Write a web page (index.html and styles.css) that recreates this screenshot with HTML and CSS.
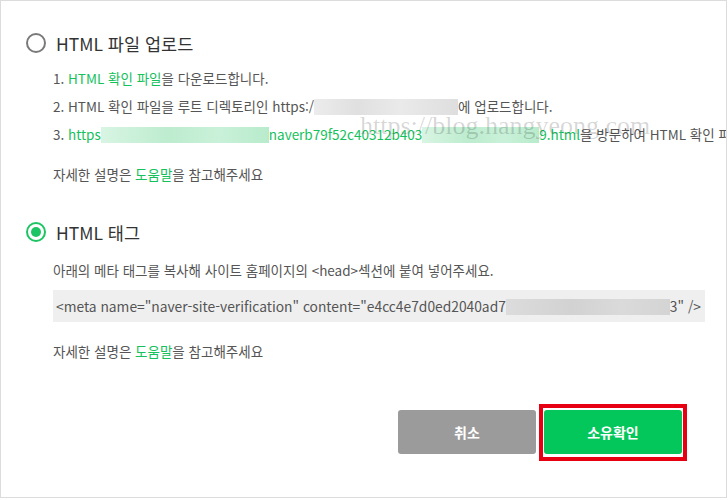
FILE: index.html
```html
<!DOCTYPE html>
<html lang="ko">
<head>
<meta charset="utf-8">
<link rel="stylesheet" href="styles.css">
</head>
<body>
<div class="dialog">
  <div class="section first">
    <div class="option">
      <span class="radio"></span>
      <span class="option-label">HTML 파일 업로드</span>
    </div>
    <ol class="steps">
      <li>1. <span class="green">HTML 확인 파일</span>을 다운로드합니다.</li>
      <li>2. HTML 확인 파일을 루트 디렉토리인 https:/<span class="blur gray w144"></span>에 업로드합니다.</li>
      <li>3. <span class="green">https<span class="blur mint w168"></span>naverb79f52c40312b403<span class="blur mint w117"></span>9.html</span>을 방문하여 HTML 확인 파일이 업로드 되었는지 확인합니다.</li>
    </ol>
    <p class="help">자세한 설명은 <span class="green">도움말</span>을 참고해주세요</p>
  </div>
  <div class="section second">
    <div class="option">
      <span class="radio checked"></span>
      <span class="option-label">HTML 태그</span>
    </div>
    <p class="desc">아래의 메타 태그를 복사해 사이트 홈페이지의 &lt;head&gt;섹션에 붙여 넣어주세요.</p>
    <div class="code">&lt;meta name="naver-site-verification" content="e4cc4e7d0ed2040ad7<span class="blur code-blur w164"></span>3" /&gt;</div>
    <p class="help">자세한 설명은 <span class="green">도움말</span>을 참고해주세요</p>
  </div>
  <div class="actions">
    <button class="btn cancel">취소</button>
    <span class="ok-wrap">
      <button class="btn ok">소유확인</button>
      <span class="highlight"></span>
    </span>
  </div>
  <div class="watermark">https://blog.hangyeong.com</div>
</div>
</body>
</html>
```

FILE: styles.css
```css
* { box-sizing: border-box; }
html, body { margin: 0; padding: 0; background: #fff; }
body {
  font-family: "Noto Sans CJK KR", "Noto Sans", sans-serif;
  color: #555;
  font-size: 13.5px;
}
.dialog {
  position: relative;
  width: 727px;
  height: 498px;
  border: 1px solid #dcdcdc;
  overflow: hidden;
  padding: 30px 0 0 25px;
}
.option {
  display: flex;
  align-items: center;
  height: 24px;
}
.radio {
  width: 20px;
  height: 20px;
  border-radius: 50%;
  border: 2px solid #7a7a7a;
  display: flex;
  align-items: center;
  justify-content: center;
  flex: none;
}
.radio.checked {
  border: 2.5px solid #1dc463;
}
.radio.checked::after {
  content: "";
  width: 10px;
  height: 10px;
  border-radius: 50%;
  background: #1dc463;
}
.option-label {
  margin-left: 10px;
  font-size: 17.5px;
  color: #333;
}
.steps {
  list-style: none;
  margin: 9px 0 0 27px;
  padding: 0;
}
.steps li {
  height: 28px;
  line-height: 28px;
  white-space: nowrap;
}
.green { color: #14c15b; }
.blur {
  display: inline-block;
  height: 16px;
  vertical-align: -3px;
}
.blur.gray { background: linear-gradient(90deg, #ececec, #e0e0e0 30%, #eaeaea 60%, #dedede); }
.blur.mint { background: linear-gradient(90deg, #d8f5e3, #bdeccf 40%, #c9f1d9 70%, #b8ebcc); }
.blur.code-blur { background: linear-gradient(90deg, #dcdcdc, #d2d2d2 40%, #dadada 70%, #d4d4d4); }
.w144 { width: 144px; }
.w168 { width: 168px; }
.w117 { width: 117px; }
.w164 { width: 164px; }
.help {
  margin: 12px 0 0 27px;
  height: 28px;
  line-height: 28px;
}
.section.second { margin-top: 32px; }
.desc {
  margin: 12px 0 0 27px;
  height: 28px;
  line-height: 28px;
}
.code {
  margin: 6px 0 0 27px;
  width: 652px;
  height: 32px;
  line-height: 32px;
  background: #efefef;
  padding-left: 3px;
  white-space: nowrap;
  font-size: 13.8px;
}
.second .help { margin-top: 15px; }
.actions {
  display: flex;
  gap: 8px;
  margin: 45px 0 0 372px;
}
.btn {
  width: 138px;
  height: 44px;
  border: 0;
  border-radius: 3px;
  color: #fff;
  font-family: "Noto Sans CJK KR", sans-serif;
  font-size: 14px;
  font-weight: 700;
  padding: 0;
}
.btn.cancel { background: #9b9b9b; }
.btn.ok { background: #03c75a; display: block; }
.ok-wrap { position: relative; display: block; }
.highlight {
  position: absolute;
  left: -5px;
  right: -5px;
  top: -6px;
  bottom: -7px;
  border: 4px solid #e60012;
}
.watermark {
  position: absolute;
  left: 359px;
  top: 112px;
  font-family: "Liberation Serif", serif;
  font-size: 26px;
  line-height: 26px;
  color: rgba(0, 0, 0, 0.17);
  white-space: nowrap;
  pointer-events: none;
}
```
